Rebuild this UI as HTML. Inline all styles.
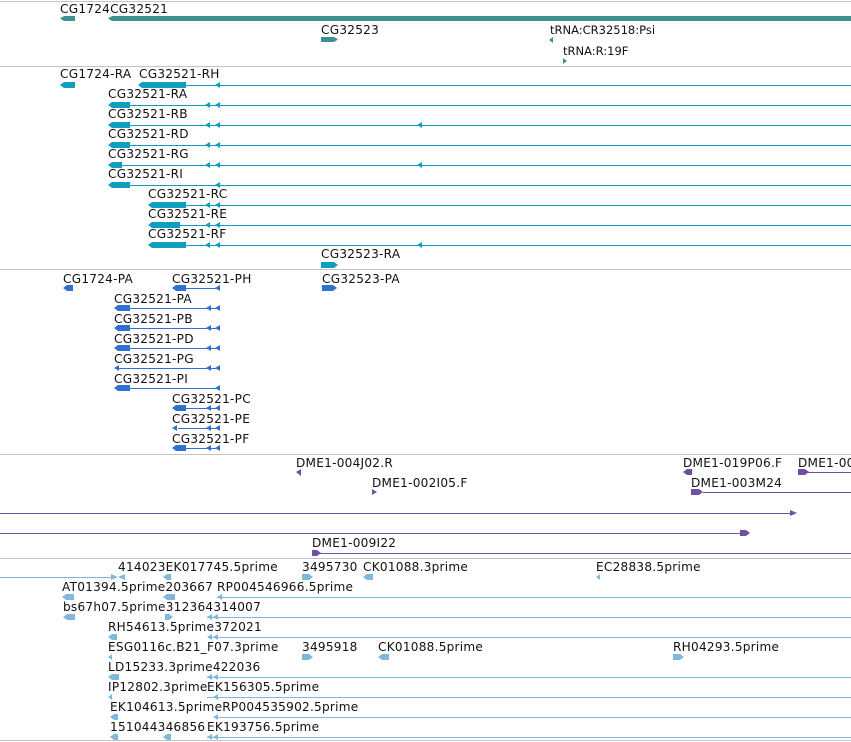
<!DOCTYPE html>
<html><head><meta charset="utf-8"><style>
html,body{margin:0;padding:0;background:#fff;width:851px;height:742px;overflow:hidden}
svg text{font-family:"DejaVu Sans","Liberation Sans",sans-serif;font-size:12.1px;letter-spacing:0.25px;fill:#111}
</style></head><body>
<svg width="851" height="742" xmlns="http://www.w3.org/2000/svg">
<g stroke="#c4c4c4" stroke-width="1" shape-rendering="crispEdges">
<line x1="0" y1="1.5" x2="851" y2="1.5"/><line x1="0" y1="66.5" x2="851" y2="66.5"/>
<line x1="0" y1="269.5" x2="851" y2="269.5"/><line x1="0" y1="454.5" x2="851" y2="454.5"/>
<line x1="0" y1="558.5" x2="851" y2="558.5"/><line x1="0" y1="740.5" x2="851" y2="740.5"/>
</g>
<!-- genes -->
<g fill="#3f8f93">
<polygon points="60,18.5 64,16 75,16 75,21 64,21"/>
<polygon points="108,18.5 112,16 851,16 851,21 112,21"/>
<polygon points="321,37 334,37 338,39.5 334,42 321,42"/>
<polygon points="549,40 553,37 553,43"/>
<polygon points="567,61 563,58 563,64"/>
</g>
<text x="60" y="13">CG1724CG32521</text>
<text x="321" y="34">CG32523</text>
<text x="550" y="34" style="font-size:11.5px;letter-spacing:0">tRNA:CR32518:Psi</text>
<text x="563" y="55" style="font-size:11.5px;letter-spacing:0">tRNA:R:19F</text>
<!-- transcripts -->
<g stroke="#0e9ec0" stroke-width="1" shape-rendering="crispEdges">
<line x1="186" y1="85.5" x2="851" y2="85.5"/><line x1="130" y1="105.5" x2="851" y2="105.5"/>
<line x1="130" y1="125.5" x2="851" y2="125.5"/><line x1="130" y1="145.5" x2="851" y2="145.5"/>
<line x1="122" y1="165.5" x2="851" y2="165.5"/><line x1="130" y1="185.5" x2="851" y2="185.5"/>
<line x1="186" y1="205.5" x2="851" y2="205.5"/><line x1="180" y1="225.5" x2="851" y2="225.5"/>
<line x1="186" y1="245.5" x2="851" y2="245.5"/>
</g>
<g fill="#0e9ec0">
<polygon points="60,85 64,82 75,82 75,88 64,88"/>
<polygon points="138,85 142,82 186,82 186,88 142,88"/>
<polygon points="108,105 112,102 130,102 130,108 112,108"/>
<polygon points="108,125 112,122 130,122 130,128 112,128"/>
<polygon points="108,145 112,142 130,142 130,148 112,148"/>
<polygon points="108,165 112,162 122,162 122,168 112,168"/>
<polygon points="108,185 112,182 130,182 130,188 112,188"/>
<polygon points="148,205 152,202 186,202 186,208 152,208"/>
<polygon points="148,225 152,222 180,222 180,228 152,228"/>
<polygon points="148,245 152,242 186,242 186,248 152,248"/>
<polygon points="321,262 334,262 338,265 334,268 321,268"/>
<polygon points="215,85 220,82 220,88"/>
<polygon points="205,105 210,102 210,108"/><polygon points="215,105 220,102 220,108"/>
<polygon points="205,125 210,122 210,128"/><polygon points="215,125 220,122 220,128"/><polygon points="417,125 422,122 422,128"/>
<polygon points="205,145 210,142 210,148"/><polygon points="215,145 220,142 220,148"/>
<polygon points="205,165 210,162 210,168"/><polygon points="215,165 220,162 220,168"/><polygon points="417,165 422,162 422,168"/>
<polygon points="215,185 220,182 220,188"/>
<polygon points="205,205 210,202 210,208"/><polygon points="215,205 220,202 220,208"/>
<polygon points="205,225 210,222 210,228"/><polygon points="215,225 220,222 220,228"/>
<polygon points="205,245 210,242 210,248"/><polygon points="215,245 220,242 220,248"/><polygon points="417,245 422,242 422,248"/>
</g>
<text x="60" y="78">CG1724-RA</text><text x="139" y="78">CG32521-RH</text>
<text x="108" y="98">CG32521-RA</text><text x="108" y="118">CG32521-RB</text>
<text x="108" y="138">CG32521-RD</text><text x="108" y="158">CG32521-RG</text>
<text x="108" y="178">CG32521-RI</text><text x="148" y="198">CG32521-RC</text>
<text x="148" y="218">CG32521-RE</text><text x="148" y="238">CG32521-RF</text>
<text x="321" y="258">CG32523-RA</text>
<!-- proteins -->
<g stroke="#3070d0" stroke-width="1" shape-rendering="crispEdges">
<line x1="186" y1="288.5" x2="220" y2="288.5"/>
<line x1="130" y1="308.5" x2="220" y2="308.5"/><line x1="130" y1="328.5" x2="220" y2="328.5"/>
<line x1="130" y1="348.5" x2="220" y2="348.5"/><line x1="118" y1="368.5" x2="220" y2="368.5"/>
<line x1="130" y1="388.5" x2="220" y2="388.5"/><line x1="186" y1="408.5" x2="220" y2="408.5"/>
<line x1="178" y1="428.5" x2="220" y2="428.5"/><line x1="186" y1="448.5" x2="220" y2="448.5"/>
</g>
<g fill="#3070d0">
<polygon points="63,288 67,285 73,285 73,291 67,291"/>
<polygon points="172,288 176,285 186,285 186,291 176,291"/>
<polygon points="322,285 333,285 337,288 333,291 322,291"/>
<polygon points="114,308 118,305 130,305 130,311 118,311"/>
<polygon points="114,328 118,325 130,325 130,331 118,331"/>
<polygon points="114,348 118,345 130,345 130,351 118,351"/>
<polygon points="114,368 119,365 119,371"/>
<polygon points="114,388 118,385 130,385 130,391 118,391"/>
<polygon points="172,408 176,405 186,405 186,411 176,411"/>
<polygon points="172,428 177,425 177,431"/>
<polygon points="172,448 176,445 186,445 186,451 176,451"/>
<polygon points="215,288 220,285 220,291"/>
<polygon points="206,308 211,305 211,311"/><polygon points="215,308 220,305 220,311"/>
<polygon points="206,328 211,325 211,331"/><polygon points="215,328 220,325 220,331"/>
<polygon points="206,348 211,345 211,351"/><polygon points="215,348 220,345 220,351"/>
<polygon points="206,368 211,365 211,371"/><polygon points="215,368 220,365 220,371"/>
<polygon points="215,388 220,385 220,391"/>
<polygon points="206,408 211,405 211,411"/><polygon points="215,408 220,405 220,411"/>
<polygon points="206,428 211,425 211,431"/><polygon points="215,428 220,425 220,431"/>
<polygon points="206,448 211,445 211,451"/><polygon points="215,448 220,445 220,451"/>
</g>
<text x="63" y="283">CG1724-PA</text><text x="172" y="283">CG32521-PH</text><text x="322" y="283">CG32523-PA</text>
<text x="114" y="303">CG32521-PA</text><text x="114" y="323">CG32521-PB</text>
<text x="114" y="343">CG32521-PD</text><text x="114" y="363">CG32521-PG</text>
<text x="114" y="383">CG32521-PI</text><text x="172" y="403">CG32521-PC</text>
<text x="172" y="423">CG32521-PE</text><text x="172" y="443">CG32521-PF</text>
<!-- clones -->
<g stroke="#7050a0" stroke-width="1" shape-rendering="crispEdges">
<line x1="808" y1="472.5" x2="851" y2="472.5"/><line x1="703" y1="492.5" x2="851" y2="492.5"/>
<line x1="0" y1="513.5" x2="790" y2="513.5"/><line x1="0" y1="533.5" x2="742" y2="533.5"/>
<line x1="320" y1="553.5" x2="851" y2="553.5"/>
</g>
<g fill="#7050a0">
<polygon points="296,472 301,469 301,476"/>
<polygon points="377,492 372,489 372,495"/>
<polygon points="683,472 687,469 692,469 692,475 687,475"/>
<polygon points="798,469 805,469 809,472 805,475 798,475"/>
<polygon points="691,489 699,489 703,492 699,495 691,495"/>
<polygon points="790,510 797,513 790,516"/>
<polygon points="740,530 746,530 750,533 746,536 740,536"/>
<polygon points="312,550 317,550 321,553 317,556 312,556"/>
</g>
<text x="296" y="467">DME1-004J02.R</text><text x="372" y="487">DME1-002I05.F</text>
<text x="683" y="467">DME1-019P06.F</text><text x="798" y="467">DME1-00</text>
<text x="691" y="487">DME1-003M24</text><text x="312" y="547">DME1-009I22</text>
<!-- ESTs -->
<g stroke="#80b8dc" stroke-width="1" shape-rendering="crispEdges">
<line x1="0" y1="577.5" x2="112" y2="577.5"/>
<line x1="217" y1="597.5" x2="851" y2="597.5"/><line x1="207" y1="617.5" x2="851" y2="617.5"/>
<line x1="210" y1="637.5" x2="851" y2="637.5"/><line x1="207" y1="677.5" x2="851" y2="677.5"/>
<line x1="207" y1="697.5" x2="851" y2="697.5"/><line x1="217" y1="717.5" x2="851" y2="717.5"/>
<line x1="207" y1="737.5" x2="851" y2="737.5"/>
</g>
<g fill="#80b8dc">
<polygon points="111,574 118,577 111,580"/><polygon points="118,577 125,574 125,580"/>
<polygon points="163,577 167,574 171,574 171,580 167,580"/>
<polygon points="302,574 309,574 313,577 309,580 302,580"/>
<polygon points="363,577 367,574 373,574 373,580 367,580"/>
<polygon points="596,577 600,574 600,580"/>
<polygon points="62,597 66,594 74,594 74,600 66,600"/>
<polygon points="163,597 167,594 175,594 175,600 167,600"/>
<polygon points="217,597 222,594 222,600"/>
<polygon points="63,617 67,614 75,614 75,620 67,620"/>
<polygon points="165,614 169,614 173,617 169,620 165,620"/>
<polygon points="207,617 212,614 212,620"/><polygon points="213,617 218,614 218,620"/>
<polygon points="108,637 112,634 117,634 117,640 112,640"/>
<polygon points="207,637 212,634 212,640"/><polygon points="213,637 218,634 218,640"/>
<polygon points="108,657 112,654 112,660"/>
<polygon points="302,654 309,654 313,657 309,660 302,660"/>
<polygon points="378,657 382,654 389,654 389,660 382,660"/>
<polygon points="673,654 680,654 684,657 680,660 673,660"/>
<polygon points="108,677 112,674 119,674 119,680 112,680"/>
<polygon points="207,677 212,674 212,680"/><polygon points="213,677 218,674 218,680"/>
<polygon points="108,697 112,694 112,700"/><polygon points="213,697 218,694 218,700"/>
<polygon points="110,717 114,714 118,714 118,720 114,720"/><polygon points="213,717 218,714 218,720"/>
<polygon points="110,737 114,734 118,734 118,740 114,740"/>
<polygon points="163,737 167,734 171,734 171,740 167,740"/>
<polygon points="207,737 212,734 212,740"/><polygon points="213,737 218,734 218,740"/>
</g>
<text x="118" y="571">414023EK017745.5prime</text>
<text x="302" y="571">3495730</text><text x="363" y="571">CK01088.3prime</text>
<text x="596" y="571">EC28838.5prime</text>
<text x="62" y="591">AT01394.5prime203667</text><text x="217" y="591">RP004546966.5prime</text>
<text x="63" y="611">bs67h07.5prime312364314007</text>
<text x="108" y="631">RH54613.5prime372021</text>
<text x="108" y="651">ESG0116c.B21_F07.3prime</text><text x="302" y="651">3495918</text>
<text x="378" y="651">CK01088.5prime</text><text x="673" y="651">RH04293.5prime</text>
<text x="108" y="671">LD15233.3prime422036</text>
<text x="108" y="691">IP12802.3prime</text><text x="207" y="691">EK156305.5prime</text>
<text x="110" y="711">EK104613.5primeRP004535902.5prime</text>
<text x="110" y="731">151044346856</text><text x="207" y="731">EK193756.5prime</text>
</svg>
</body></html>
